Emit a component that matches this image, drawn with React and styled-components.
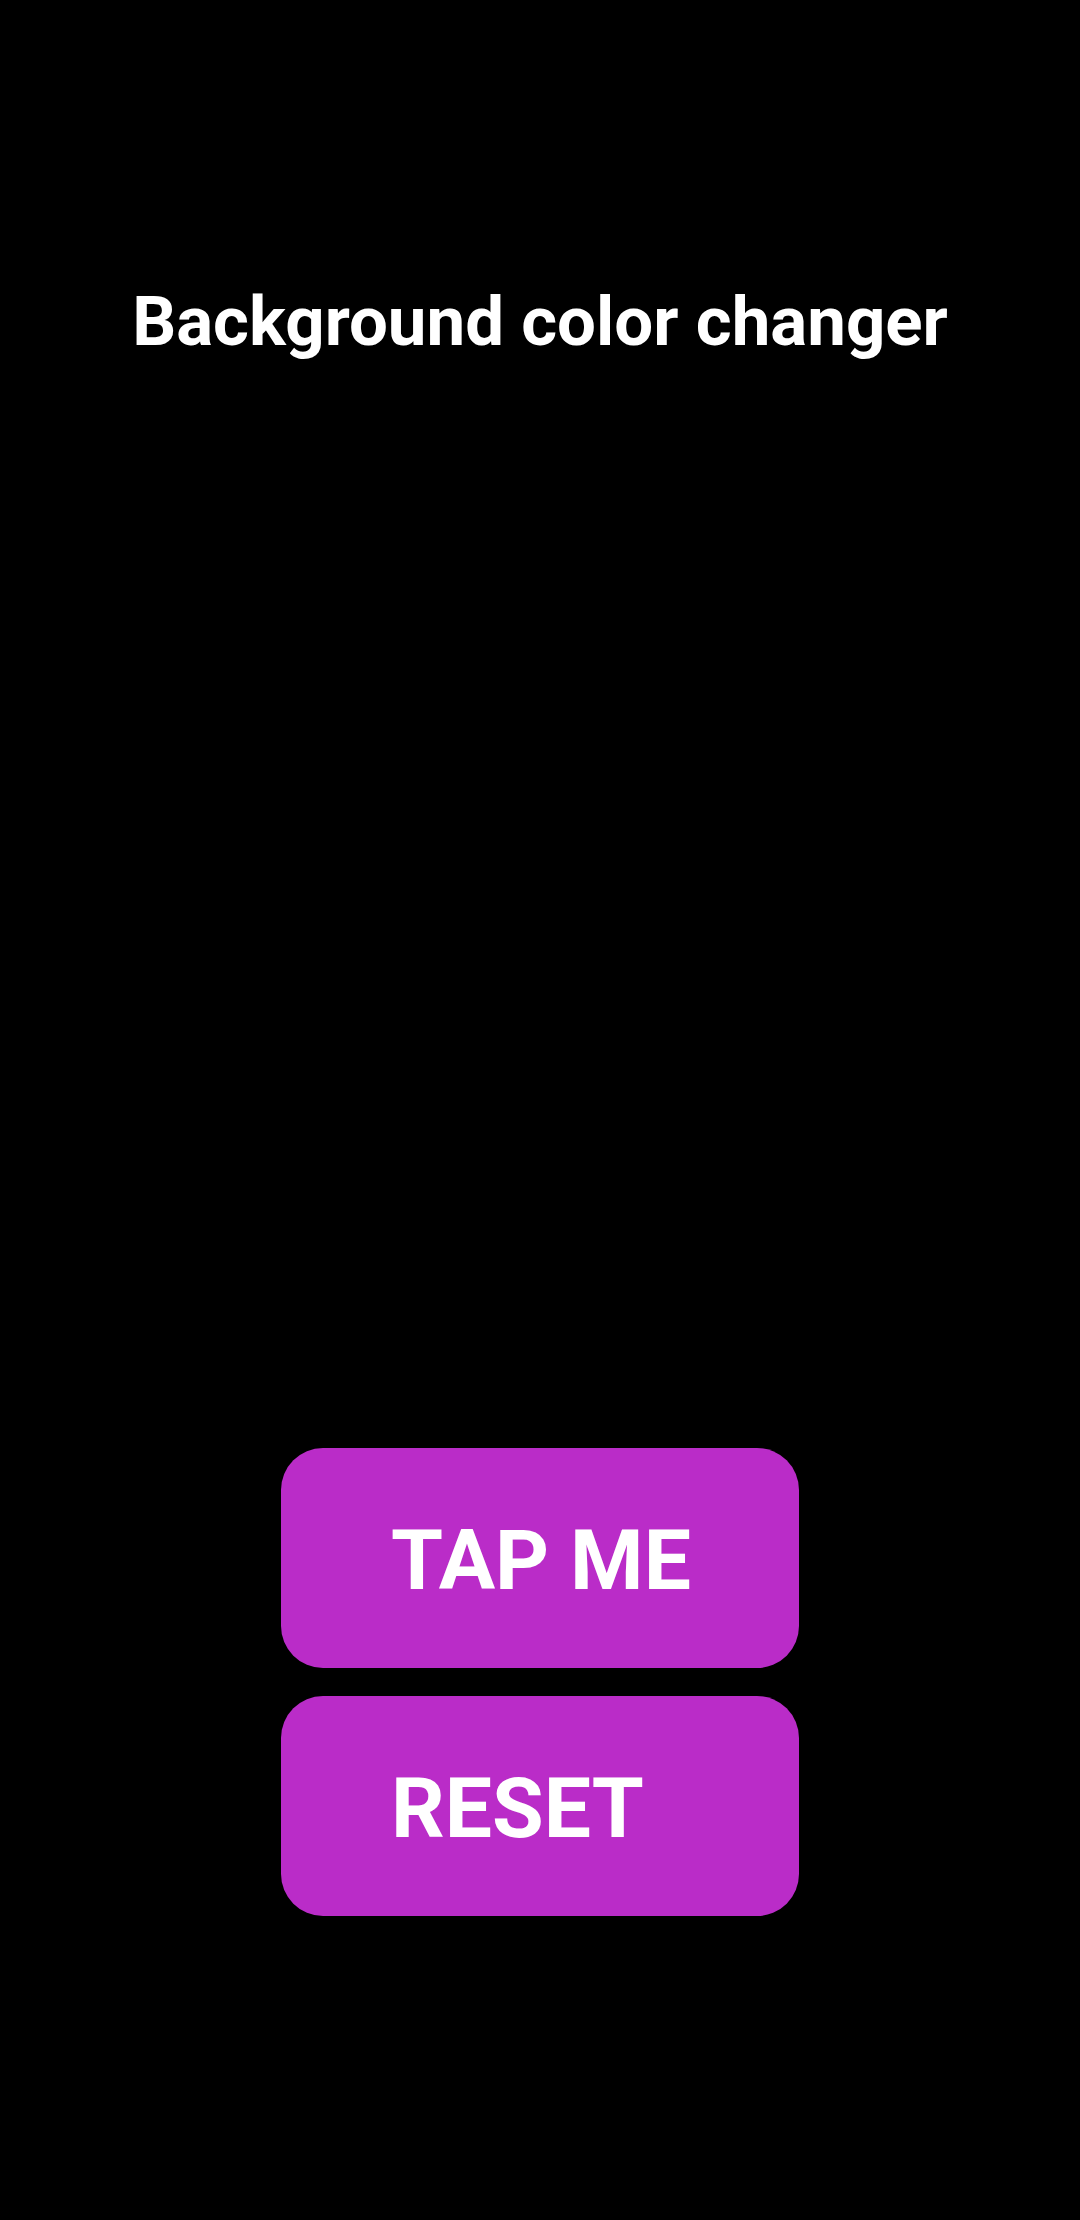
import React from "react";
import styled, { createGlobalStyle } from "styled-components";

const Global = createGlobalStyle`
  html, body { margin: 0; padding: 0; background: #000; }
  body { font-family: Roboto, "Noto Sans", "Liberation Sans", sans-serif; }
`;

const Screen = styled.div`
  width: 1080px;
  height: 2220px;
  background: #000;
  display: flex;
  flex-direction: column;
  align-items: center;
  box-sizing: border-box;
  padding-top: 283px;
`;

const Title = styled.h1`
  margin: 0;
  color: #fff;
  font-family: Roboto, "Liberation Sans", sans-serif;
  font-weight: 700;
  font-size: 69px;
  line-height: 77px;
  letter-spacing: 0;
`;

const Actions = styled.div`
  margin-top: 1088px;
  display: flex;
  flex-direction: column;
  gap: 28px;
`;

const Button = styled.button`
  width: 518px;
  height: 220px;
  border: none;
  border-radius: 42px;
  background: #ba2cc8;
  color: #fff;
  font-family: Roboto, "Liberation Sans", sans-serif;
  font-weight: 700;
  font-size: 84px;
  line-height: 1;
  text-align: left;
  padding: 6px 0 0 110px;
  display: flex;
  align-items: center;
  cursor: pointer;
`;

export default function App() {
  return (
    <>
      <Global />
      <Screen>
        <Title>Background color changer</Title>
        <Actions>
          <Button>TAP ME</Button>
          <Button>RESET</Button>
        </Actions>
      </Screen>
    </>
  );
}
